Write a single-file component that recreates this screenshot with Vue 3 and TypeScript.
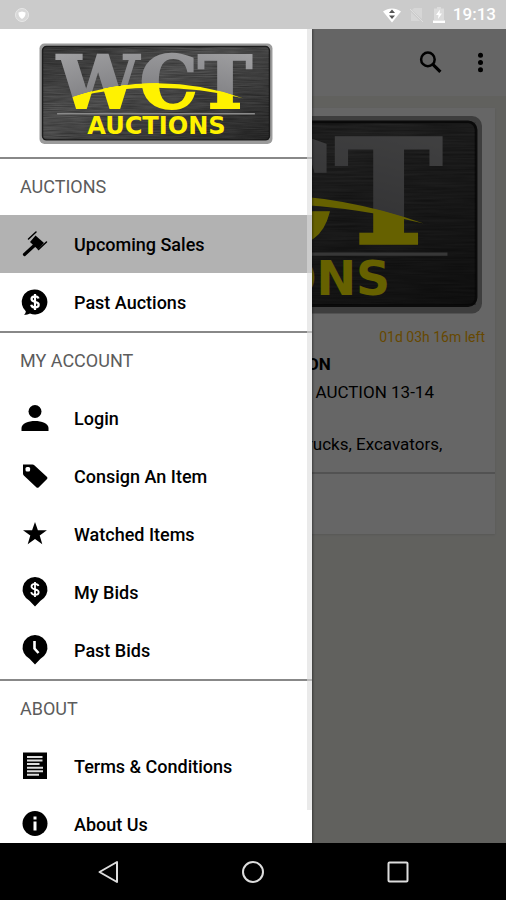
<script setup lang="ts">
import { h, ref } from 'vue'

interface MenuItem {
  label: string
  icon: string
}

interface MenuSection {
  title: string
  items: MenuItem[]
}

const sections: MenuSection[] = [
  {
    title: 'AUCTIONS',
    items: [
      { label: 'Upcoming Sales', icon: 'gavel' },
      { label: 'Past Auctions', icon: 'bubble' },
    ],
  },
  {
    title: 'MY ACCOUNT',
    items: [
      { label: 'Login', icon: 'person' },
      { label: 'Consign An Item', icon: 'tag' },
      { label: 'Watched Items', icon: 'star' },
      { label: 'My Bids', icon: 'pin-dollar' },
      { label: 'Past Bids', icon: 'pin-clock' },
    ],
  },
  {
    title: 'ABOUT',
    items: [
      { label: 'Terms & Conditions', icon: 'document' },
      { label: 'About Us', icon: 'info' },
    ],
  },
]

const selected = ref('Upcoming Sales')

// Brushed-metal plate shared by the drawer header and the sale card.
const LogoPlate = (props: { uid: string }) => {
  const id = (name: string) => `${props.uid}-${name}`
  const url = (name: string) => `url(#${id(name)})`
  return h('svg', { viewBox: '0 0 233 101', role: 'img', 'aria-label': 'WCT Auctions' }, [
    h('defs', [
      h('linearGradient', { id: id('plate'), x1: 0, y1: 0, x2: 1, y2: 1 }, [
        h('stop', { offset: '0', 'stop-color': '#3a3a3a' }),
        h('stop', { offset: '0.4', 'stop-color': '#585858' }),
        h('stop', { offset: '1', 'stop-color': '#2c2c2c' }),
      ]),
      h('radialGradient', { id: id('ink'), gradientUnits: 'userSpaceOnUse', cx: 116, cy: 296, r: 300 }, [
        h('stop', { offset: '0', 'stop-color': '#fff200' }),
        h('stop', { offset: '0.852', 'stop-color': '#fff200' }),
        h('stop', { offset: '0.854', 'stop-color': '#858588' }),
        h('stop', { offset: '1', 'stop-color': '#a0a0a2' }),
      ]),
      h('filter', { id: id('grain'), x: 0, y: 0, width: 1, height: 1 }, [
        h('feTurbulence', { type: 'fractalNoise', baseFrequency: '0.04 0.9', numOctaves: 2, seed: 4 }),
        h('feColorMatrix', { type: 'matrix', values: '0 0 0 0 0  0 0 0 0 0  0 0 0 0 0  0.6 0 0 0 -0.15' }),
      ]),
    ]),
    h('rect', { x: 0.5, y: 0.5, width: 232, height: 100, rx: 5, fill: '#9b9b9b' }),
    h('rect', { x: 3.5, y: 3.5, width: 226, height: 93, rx: 4, fill: url('plate'), stroke: '#1c1c1c', 'stroke-width': 1.4 }),
    h('rect', { x: 4, y: 4, width: 225, height: 92, filter: url('grain') }),
    h('text', {
      x: 18,
      y: 65,
      'font-family': '"DejaVu Serif", serif',
      'font-weight': 700,
      'font-size': 73,
      fill: url('ink'),
      stroke: url('ink'),
      'stroke-width': 1.8,
    }, 'WCT'),
    h('path', { d: 'M34 54 A256 256 0 0 1 203 55 A370 370 0 0 0 34 54Z', fill: '#fff200' }),
    h('path', { d: 'M18 70.5H215', stroke: '#8a8a8a', 'stroke-width': 1.6 }),
    h('text', {
      x: 117,
      y: 91,
      'text-anchor': 'middle',
      'font-family': '"DejaVu Sans", sans-serif',
      'font-weight': 700,
      'font-size': 24,
      fill: '#fff200',
    }, 'AUCTIONS'),
  ])
}
LogoPlate.props = ['uid']
</script>

<template>
  <div class="screen">
    <header class="status">
      <svg class="status-app" viewBox="0 0 16 16" aria-hidden="true">
        <circle cx="8" cy="8" r="6.5" fill="#d8d8d8" stroke="#e8e8e8" />
        <path d="M4.5 5.5 8 4.5l3.500 1c.3 3-1 5-3.500 6.500C5.500 10.500 4.200 8.500 4.500 5.500Z" fill="#fff" />
      </svg>
      <div class="status-right">
        <svg class="wifi" viewBox="0 0 18 16" aria-hidden="true">
          <path d="M0 4.500C5.500.5 12.500.5 18 4.500L9 15.500Z" fill="#fff" />
          <path d="M9 2.500 12 6H6ZM9 12 6 8.500h6Z" fill="#555" />
        </svg>
        <svg class="sim" viewBox="0 0 16 16" aria-hidden="true">
          <path d="M3 3 5 1h8v11ZM2 5l9 9H2Z" fill="#d6d6d6" />
          <path d="m1 2 13 13" stroke="#dedede" />
        </svg>
        <svg class="battery" viewBox="0 0 12 16" aria-hidden="true">
          <path d="M4 0h4v1.500h3V13H1V1.500h3Z" fill="#dcdcdc" />
          <path d="M7 2.500 3 8h2.500L5 12l4-5.500H6.500ZM0 13.500h12V16H0Z" fill="#fff" />
        </svg>
        <time class="clock">19:13</time>
      </div>
    </header>

    <div class="stage">
      <main class="page">
        <div class="appbar">
          <button type="button" class="tool" aria-label="Search">
            <svg viewBox="0 0 24 24">
              <circle cx="9.500" cy="9" r="6.500" fill="none" stroke="#000" stroke-width="2.400" />
              <path d="m14 13.500 7.500 7.500" stroke="#000" stroke-width="3" />
            </svg>
          </button>
          <button type="button" class="tool" aria-label="More options">
            <svg viewBox="0 0 24 24">
              <circle cx="12" cy="5" r="2.400" />
              <circle cx="12" cy="12" r="2.400" />
              <circle cx="12" cy="19" r="2.400" />
            </svg>
          </button>
        </div>
        <article class="card">
          <div class="card-image"><LogoPlate uid="card" /></div>
          <div class="card-body">
            <p class="left">01d 03h 16m left</p>
            <h2 class="sale-title">ON</h2>
            <p class="sale-text">&nbsp;&nbsp;AUCTION 13-14<br /><br />rucks, Excavators,</p>
          </div>
          <div class="card-footer"></div>
        </article>
      </main>
      <div class="scrim"></div>

      <aside class="drawer">
        <div class="drawer-logo"><LogoPlate uid="drawer" /></div>
        <nav aria-label="Main menu">
          <section v-for="section in sections" :key="section.title" class="group">
            <h3 class="group-title">{{ section.title }}</h3>
            <button
              v-for="item in section.items"
              :key="item.label"
              type="button"
              class="item"
              :class="{ selected: item.label === selected }"
              @click="selected = item.label"
            >
              <svg class="icon" viewBox="0 0 28 28" aria-hidden="true">
                <g v-if="item.icon === 'gavel'">
                  <path d="m3.500 24.500 12-11" stroke="#000" stroke-width="3.200" stroke-linecap="round" />
                  <path d="m14.500 5.500 8.500 7.500-6 6.500-8-7.500Z" />
                  <path d="m7.500 9 7.500-7M17.500 19.500l8-7.500" stroke="#000" stroke-width="1.500" stroke-linecap="round" />
                </g>
                <g v-else-if="item.icon === 'bubble'">
                  <path d="M14 1.500a12.500 12.500 0 1 1-5 24c-1.500.9-3.500 1.300-6 1.300 1.200-1 1.800-2.200 1.800-3.600A12.500 12.500 0 0 1 14 1.500Z" />
                  <path d="M17.500 10.500c-.4-1.500-1.600-2.200-3.500-2.200-2 0-3.500 1-3.500 2.700 0 4 7.200 1.800 7.200 5.700 0 1.800-1.600 2.700-3.700 2.700s-3.500-1-3.800-2.700M14 6v16" fill="none" stroke="#fff" stroke-width="2.200" />
                </g>
                <g v-else-if="item.icon === 'person'">
                  <circle cx="14" cy="7.500" r="6.500" />
                  <path d="M.5 27v-3c0-4.500 7-7 13.500-7s13.500 2.500 13.500 7v3Z" />
                </g>
                <g v-else-if="item.icon === 'tag'">
                  <path d="M2 2.500h9.500c.8 0 1.300.2 1.800.7l12.500 11.500c.8.8.8 1.700 0 2.500l-8 8c-.8.8-1.700.8-2.500 0L2.800 13.500C2.200 12.900 2 12.400 2 11.600Z" />
                  <rect x="4.500" y="5" width="4.600" height="4.600" rx="1.500" fill="#fff" />
                </g>
                <path v-else-if="item.icon === 'star'" d="m14 2 2.900 8.300h9l-7.200 5.300 2.600 8.600-7.300-5.200-7.300 5.200 2.600-8.600L2 10.300h9.100Z" />
                <g v-else-if="item.icon === 'pin-dollar'">
                  <path d="M14-1a12.500 12.500 0 0 1 5.500 23.700L14 28.500l-5.500-5.800A12.500 12.500 0 0 1 14-1Z" />
                  <path d="M17.500 8c-.4-1.500-1.600-2.200-3.500-2.200-2 0-3.500 1-3.500 2.700 0 4 7.200 1.800 7.200 5.700 0 1.800-1.600 2.700-3.700 2.700s-3.500-1-3.800-2.700M14 4v15" fill="none" stroke="#fff" stroke-width="1.800" />
                </g>
                <g v-else-if="item.icon === 'pin-clock'">
                  <path d="M14-1a12.500 12.500 0 0 1 5.500 23.700L14 28.500l-5.500-5.800A12.500 12.500 0 0 1 14-1Z" />
                  <path d="M13.500 5v7.500l4 4.500" fill="none" stroke="#fff" stroke-width="2.600" />
                </g>
                <g v-else-if="item.icon === 'document'">
                  <path d="M2 .500h24v26.500H2Z" />
                  <path d="M6 5h15.500M6 8.500h15.500M6 12h12.500M6 15.800h16M6 19.300h16M6 22.800h12" stroke="#ddd" stroke-width="1.900" />
                </g>
                <g v-else>
                  <circle cx="14" cy="13.500" r="12.500" />
                  <path d="M12.500 11.500h3v9h-3ZM12.500 6.500h3v3h-3Z" fill="#fff" />
                </g>
              </svg>
              <span>{{ item.label }}</span>
            </button>
          </section>
        </nav>
        <div class="scrollbar"></div>
      </aside>
    </div>

    <footer class="navbar">
      <button type="button" aria-label="Back">
        <svg viewBox="0 0 24 24"><path d="M21 2v20L3.500 12Z" /></svg>
      </button>
      <button type="button" aria-label="Home">
        <svg viewBox="0 0 24 24"><circle cx="12" cy="12" r="10" /></svg>
      </button>
      <button type="button" aria-label="Recent apps">
        <svg viewBox="0 0 24 24"><rect x="2.500" y="2.500" width="19" height="19" rx="1" /></svg>
      </button>
    </footer>
  </div>
</template>

<style>
body {
  margin: 0;
}
</style>

<style scoped>
.screen {
  display: flex;
  flex-direction: column;
  height: 100vh;
  font-family: Roboto, "Liberation Sans", sans-serif;
  color: #000;
  overflow: hidden;
}

button {
  margin: 0;
  padding: 0;
  border: 0;
  background: none;
  font: inherit;
  color: inherit;
  cursor: pointer;
}

h2,
h3,
p {
  margin: 0;
}

svg {
  display: block;
}

.status {
  display: flex;
  flex: none;
  align-items: center;
  justify-content: space-between;
  height: 29px;
  padding: 0 10px 0 14px;
  background: #cbcbcb;
}

.status-app {
  width: 16px;
  height: 16px;
}

.status-right {
  display: flex;
  align-items: center;
  gap: 8px;
}

.wifi {
  width: 18px;
  height: 16px;
}

.sim {
  width: 16px;
  height: 16px;
}

.battery {
  width: 12px;
  height: 16px;
}

.clock {
  color: #fff;
  font-size: 17px;
  font-weight: 500;
  line-height: 29px;
}

.stage {
  position: relative;
  flex: 1;
  min-height: 0;
  overflow: hidden;
}

.page {
  height: 100%;
  background: #f2f2ec;
}

.appbar {
  display: flex;
  align-items: center;
  justify-content: flex-end;
  gap: 25px;
  height: 67px;
  padding-right: 13px;
  background: #fcfcfc;
}

.tool svg {
  width: 25px;
  height: 25px;
}

.card {
  margin: 12px 11px 0;
  background: #fff;
  box-shadow: 0 1px 2px rgba(0, 0, 0, 0.1);
}

.card-image {
  padding: 7px 12px 0;
}

.card-body {
  padding: 13px 10px 15px 296px;
  border-bottom: 2px solid #ccc;
}

.left {
  color: #ffb400;
  font-size: 14px;
  line-height: 20px;
  text-align: right;
}

.sale-title {
  margin-top: 4px;
  font-size: 17px;
  font-weight: 700;
  line-height: 26px;
}

.sale-text {
  margin-top: 2px;
  font-size: 17px;
  line-height: 26px;
}

.card-footer {
  height: 60px;
}

.scrim {
  position: absolute;
  inset: 0;
  background: rgba(0, 0, 0, 0.6);
}

.drawer {
  position: absolute;
  top: 0;
  bottom: 0;
  left: 0;
  width: 312px;
  max-width: 85%;
  background: #fff;
  box-shadow: 1px 0 2px rgba(0, 0, 0, 0.4);
  overflow: hidden;
}

.drawer-logo {
  padding: 14px 39px 13px;
}

.group {
  border-top: 2px solid #888;
}

.group-title {
  padding-left: 20px;
  color: #5c5c5c;
  font-size: 18px;
  font-weight: 400;
  line-height: 56px;
}

.item {
  display: flex;
  align-items: center;
  gap: 25px;
  width: 100%;
  height: 58px;
  padding-left: 21px;
  font-size: 18px;
  font-weight: 500;
  text-align: left;
}

.item.selected {
  background: #b2b2b2;
}

.icon {
  flex: none;
  width: 28px;
  height: 28px;
  overflow: visible;
}

.scrollbar {
  position: absolute;
  top: 0;
  right: 0;
  width: 5px;
  height: 96%;
  background: rgba(220, 220, 220, 0.6);
}

.navbar {
  display: flex;
  flex: none;
  justify-content: center;
  height: 57px;
  background: #000;
}

.navbar button {
  display: flex;
  align-items: center;
  justify-content: center;
  width: 29%;
  max-width: 145px;
}

.navbar svg {
  width: 24px;
  height: 24px;
  fill: none;
  stroke: #ddd;
  stroke-width: 2;
  stroke-linejoin: round;
}
</style>
